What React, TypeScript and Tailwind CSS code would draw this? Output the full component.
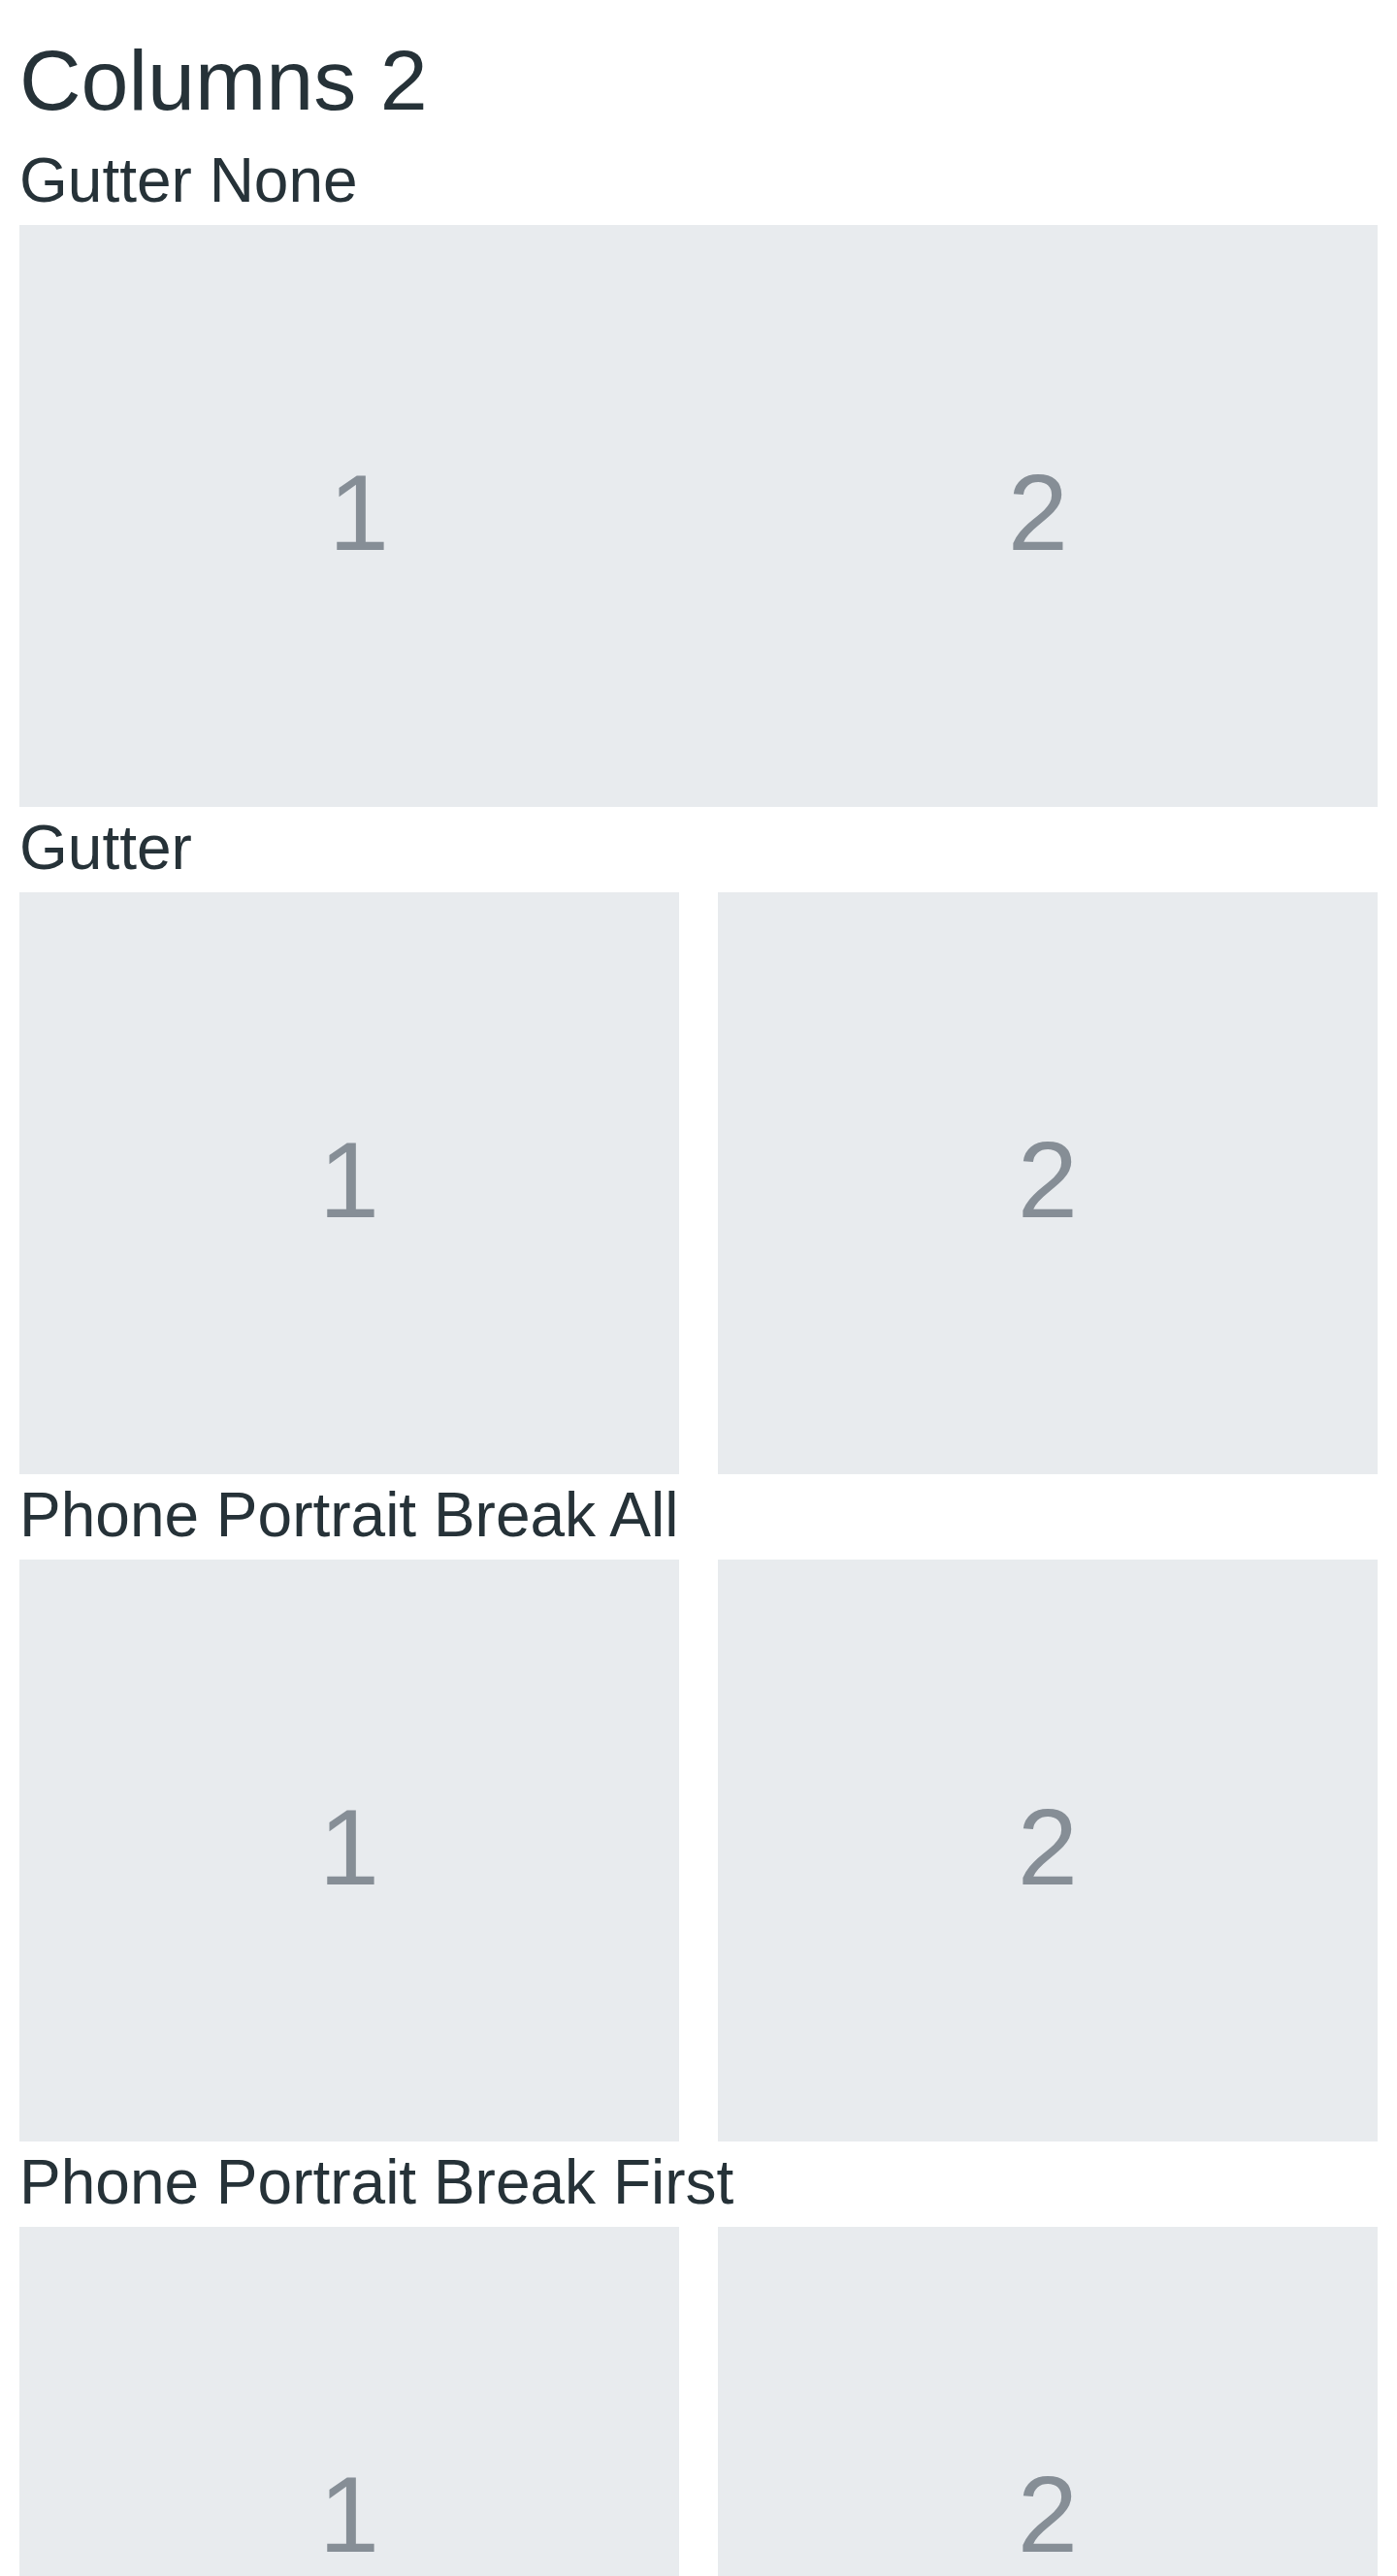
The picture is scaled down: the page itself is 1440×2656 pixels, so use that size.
const sections = [
  { title: "Gutter None", gutter: false },
  { title: "Gutter", gutter: true },
  { title: "Phone Portrait Break All", gutter: true },
  { title: "Phone Portrait Break First", gutter: true },
];

function Cell({ label }: { label: string }) {
  return (
    <div className="flex h-[600px] items-center justify-center bg-[#e8ebee] pb-[7px] text-[112px] text-[#868e96]">
      {label}
    </div>
  );
}

export default function App() {
  return (
    <div
      className="min-h-screen bg-white px-5 text-[#263238]"
      style={{ fontFamily: '"Liberation Sans", Arial, sans-serif' }}
    >
      <h1 className="pt-[22px] pb-px text-[88px] leading-[121px]">Columns 2</h1>
      {sections.map((s) => (
        <section key={s.title}>
          <h2 className="pb-1 text-[64px] leading-[84px]">{s.title}</h2>
          <div className={s.gutter ? "grid grid-cols-2 gap-10" : "grid grid-cols-2"}>
            <Cell label="1" />
            <Cell label="2" />
          </div>
        </section>
      ))}
    </div>
  );
}
